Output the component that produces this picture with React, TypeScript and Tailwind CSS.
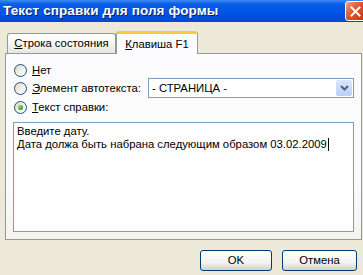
import React from "react";

const font = { fontFamily: '"Liberation Sans", "DejaVu Sans", sans-serif' };

const Radio = ({ checked }: { checked?: boolean }) => (
  <span className="flex h-[13px] w-[13px] shrink-0 items-center justify-center rounded-full border border-[#1c5180] bg-[linear-gradient(135deg,#dcd9c9_0%,#f5f4ef_60%,#ffffff_100%)]">
    {checked && (
      <span className="h-[5px] w-[5px] rounded-full bg-[radial-gradient(circle_at_35%_35%,#8fe08f_0%,#21a121_70%)]" />
    )}
  </span>
);

const XpButton = ({ label, width }: { label: string; width: string }) => (
  <button
    className={`flex h-[21px] items-center justify-center rounded-[3px] border border-[#003c74] bg-[linear-gradient(to_bottom,#ffffff_0%,#f4f4f0_60%,#d6d0c5_100%)] text-[11.3px] text-black ${width}`}
  >
    {label}
  </button>
);

export default function App() {
  return (
    <div className="h-[275px] w-[363px] overflow-hidden bg-[#ece9d8]" style={font}>
      <div className="w-[368px]">
        {/* title bar */}
        <div className="flex h-[22px] items-center justify-between bg-[linear-gradient(to_bottom,#3d8cf5_0%,#0a5ee6_18%,#0055e5_55%,#0049d0_100%)] pl-[3px] pr-[2px]">
          <span className="text-[13.5px] font-bold tracking-[0.1px] text-white [text-shadow:1px_1px_0_#0a246a]">
            Текст справки для поля формы
          </span>
          <span className="flex h-[20px] w-[21px] items-center justify-center rounded-[3px] border border-white bg-[linear-gradient(135deg,#f0a08a_0%,#e0552f_45%,#c2330f_100%)]">
            <svg width="11" height="11" viewBox="0 0 11 11">
              <path d="M1.5 1.5 L9.5 9.5 M9.5 1.5 L1.5 9.5" stroke="#fff" strokeWidth="2" strokeLinecap="square" />
            </svg>
          </span>
        </div>

        <div className="px-[5px] pt-[9px]">
          {/* tabs */}
          <div className="flex items-end pl-[2px]">
            <div className="flex h-[20px] w-[109px] items-center justify-center rounded-t-[3px] border border-b-0 border-[#919b9c] bg-[linear-gradient(to_bottom,#ffffff_0%,#f3f3ef_60%,#e6e5de_100%)] text-[11.3px] text-black">
              <span>
                <span className="underline">С</span>трока состояния
              </span>
            </div>
            <div className="relative z-10 -mb-px flex h-[23px] w-[82px] items-center justify-center rounded-t-[3px] border border-b-0 border-t-[3px] border-[#919b9c] border-t-[#ffc83c] bg-[#fcfcfe] text-[11.3px] text-black">
              <span>
                <span className="underline">К</span>лавиша F1
              </span>
            </div>
          </div>

          {/* panel */}
          <div className="flex h-[187px] w-[357px] flex-col border border-[#919b9c] bg-[linear-gradient(to_bottom,#fcfcfe_0%,#fbfbf9_70%,#f4f3ee_100%)] px-[7px] pt-[9px] text-[11.3px] text-black">
            <div className="flex h-[14px] items-center gap-[5px] pl-[1px]">
              <Radio />
              <span>
                <span className="underline">Н</span>ет
              </span>
            </div>
            <div className="mt-px flex h-[20px] items-center pl-[1px]">
              <div className="flex w-[134px] items-center gap-[5px]">
                <Radio />
                <span>
                  <span className="underline">Э</span>лемент автотекста:
                </span>
              </div>
              <div className="flex h-[20px] w-[206px] items-center border border-[#7f9db9] bg-white pl-[3px]">
                <span className="flex-1">- СТРАНИЦА -</span>
                <span className="mr-px flex h-[16px] w-[16px] items-center justify-center rounded-[2px] bg-[linear-gradient(to_bottom,#dbe6fe_0%,#bccffb_100%)]">
                  <svg width="9" height="6" viewBox="0 0 9 6">
                    <path d="M1 1 L4.5 4.5 L8 1" fill="none" stroke="#4d6185" strokeWidth="2" />
                  </svg>
                </span>
              </div>
            </div>
            <div className="mt-[2px] flex h-[14px] items-center gap-[5px] pl-[1px]">
              <Radio checked />
              <span>
                <span className="underline">Т</span>екст справки:
              </span>
            </div>
            <div className="mt-[8px] h-[110px] w-[341px] border border-[#7f9db9] bg-white px-[3px] pt-[2px] leading-[13px]">
              <div>Введите дату.</div>
              <div className="flex items-center">
                Дата должа быть набрана следующим образом 03.02.2009
                <span className="ml-px inline-block h-[13px] w-px bg-black" />
              </div>
            </div>
          </div>

          {/* buttons */}
          <div className="mt-[10px] flex justify-end gap-[10px] pr-[6px]">
            <XpButton label="OK" width="w-[72px]" />
            <XpButton label="Отмена" width="w-[75px]" />
          </div>
        </div>
      </div>
    </div>
  );
}
